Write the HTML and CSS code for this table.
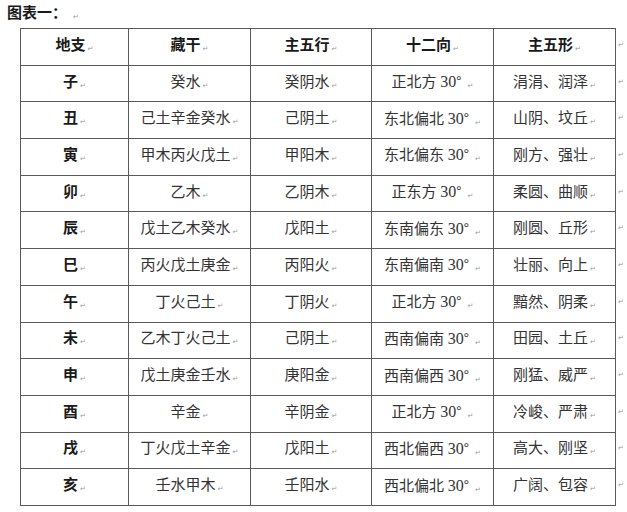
FILE: index.html
```html
<!DOCTYPE html>
<html lang="zh">
<head>
<meta charset="utf-8">
<link rel="stylesheet" href="styles.css">
</head>
<body>
<div class="title">图表一：<span class="pm">↵</span></div>
<table class="grid">
<colgroup><col class="c1"><col class="c2"><col class="c3"><col class="c4"><col class="c5"><col class="ce"></colgroup>
<thead>
<tr><th>地支<span class="pm">↵</span></th><th>藏干<span class="pm">↵</span></th><th>主五行<span class="pm">↵</span></th><th>十二向<span class="pm">↵</span></th><th>主五形<span class="pm">↵</span></th><td class="end"><span class="pm">↵</span></td></tr>
</thead>
<tbody>
<tr><td class="zhi">子<span class="pm">↵</span></td><td>癸水<span class="pm">↵</span></td><td>癸阴水<span class="pm">↵</span></td><td>正北方 <span class="num">30</span><span class="deg">°</span><span class="pm">↵</span></td><td>涓涓、润泽<span class="pm">↵</span></td><td class="end"><span class="pm">↵</span></td></tr>
<tr><td class="zhi">丑<span class="pm">↵</span></td><td>己土辛金癸水<span class="pm">↵</span></td><td>己阴土<span class="pm">↵</span></td><td>东北偏北 <span class="num">30</span><span class="deg">°</span><span class="pm">↵</span></td><td>山阴、坟丘<span class="pm">↵</span></td><td class="end"><span class="pm">↵</span></td></tr>
<tr><td class="zhi">寅<span class="pm">↵</span></td><td>甲木丙火戊土<span class="pm">↵</span></td><td>甲阳木<span class="pm">↵</span></td><td>东北偏东 <span class="num">30</span><span class="deg">°</span><span class="pm">↵</span></td><td>刚方、强壮<span class="pm">↵</span></td><td class="end"><span class="pm">↵</span></td></tr>
<tr><td class="zhi">卯<span class="pm">↵</span></td><td>乙木<span class="pm">↵</span></td><td>乙阴木<span class="pm">↵</span></td><td>正东方 <span class="num">30</span><span class="deg">°</span><span class="pm">↵</span></td><td>柔圆、曲顺<span class="pm">↵</span></td><td class="end"><span class="pm">↵</span></td></tr>
<tr><td class="zhi">辰<span class="pm">↵</span></td><td>戊土乙木癸水<span class="pm">↵</span></td><td>戊阳土<span class="pm">↵</span></td><td>东南偏东 <span class="num">30</span><span class="deg">°</span><span class="pm">↵</span></td><td>刚圆、丘形<span class="pm">↵</span></td><td class="end"><span class="pm">↵</span></td></tr>
<tr><td class="zhi">巳<span class="pm">↵</span></td><td>丙火戊土庚金<span class="pm">↵</span></td><td>丙阳火<span class="pm">↵</span></td><td>东南偏南 <span class="num">30</span><span class="deg">°</span><span class="pm">↵</span></td><td>壮丽、向上<span class="pm">↵</span></td><td class="end"><span class="pm">↵</span></td></tr>
<tr><td class="zhi">午<span class="pm">↵</span></td><td>丁火己土<span class="pm">↵</span></td><td>丁阴火<span class="pm">↵</span></td><td>正北方 <span class="num">30</span><span class="deg">°</span><span class="pm">↵</span></td><td>黯然、阴柔<span class="pm">↵</span></td><td class="end"><span class="pm">↵</span></td></tr>
<tr><td class="zhi">未<span class="pm">↵</span></td><td>乙木丁火己土<span class="pm">↵</span></td><td>己阴土<span class="pm">↵</span></td><td>西南偏南 <span class="num">30</span><span class="deg">°</span><span class="pm">↵</span></td><td>田园、土丘<span class="pm">↵</span></td><td class="end"><span class="pm">↵</span></td></tr>
<tr><td class="zhi">申<span class="pm">↵</span></td><td>戊土庚金壬水<span class="pm">↵</span></td><td>庚阳金<span class="pm">↵</span></td><td>西南偏西 <span class="num">30</span><span class="deg">°</span><span class="pm">↵</span></td><td>刚猛、威严<span class="pm">↵</span></td><td class="end"><span class="pm">↵</span></td></tr>
<tr><td class="zhi">酉<span class="pm">↵</span></td><td>辛金<span class="pm">↵</span></td><td>辛阴金<span class="pm">↵</span></td><td>正北方 <span class="num">30</span><span class="deg">°</span><span class="pm">↵</span></td><td>冷峻、严肃<span class="pm">↵</span></td><td class="end"><span class="pm">↵</span></td></tr>
<tr><td class="zhi">戌<span class="pm">↵</span></td><td>丁火戊土辛金<span class="pm">↵</span></td><td>戊阳土<span class="pm">↵</span></td><td>西北偏西 <span class="num">30</span><span class="deg">°</span><span class="pm">↵</span></td><td>高大、刚坚<span class="pm">↵</span></td><td class="end"><span class="pm">↵</span></td></tr>
<tr><td class="zhi">亥<span class="pm">↵</span></td><td>壬水甲木<span class="pm">↵</span></td><td>壬阳水<span class="pm">↵</span></td><td>西北偏北 <span class="num">30</span><span class="deg">°</span><span class="pm">↵</span></td><td>广阔、包容<span class="pm">↵</span></td><td class="end"><span class="pm">↵</span></td></tr>
</tbody>
</table>
</body>
</html>
```
FILE: styles.css
```css
html, body {
  margin: 0;
  padding: 0;
  background: #ffffff;
}
body {
  font-family: "Liberation Serif", "Noto Sans CJK SC", serif;
  color: #333333;
}
.title {
  padding: 4px 0 0 7px;
  height: 24px;
  font-size: 15px;
  font-weight: bold;
  line-height: 18px;
  color: #1a1a1a;
}
.pm {
  font-family: "DejaVu Sans", sans-serif;
  font-weight: normal;
  font-size: 7px;
  color: #9a9a9a;
  margin-left: 2px;
  vertical-align: -1px;
}
.title .pm {
  margin-left: 6px;
}
.grid {
  margin-left: 20px;
  border-collapse: collapse;
  table-layout: fixed;
  font-size: 15px;
}
.c1 { width: 108px; }
.c2 { width: 122px; }
.c3 { width: 121px; }
.c4 { width: 122px; }
.c5 { width: 122px; }
.ce { width: 10px; }
.grid th, .grid td {
  border: 1.5px solid #5a5a5a;
  height: 35.7px;
  padding: 0;
  text-align: center;
  vertical-align: middle;
  line-height: 18px;
  white-space: nowrap;
}
.grid th {
  font-weight: bold;
  color: #1a1a1a;
}
.grid td.zhi {
  font-weight: bold;
  color: #1a1a1a;
}
.num {
  font-size: 16px;
}
.deg {
  font-family: "Noto Sans CJK SC", sans-serif;
  font-size: 14px;
  margin-right: 4px;
}
.grid td.end {
  border: none;
  text-align: left;
  padding-left: 2px;
  vertical-align: middle;
  line-height: 10px;
}
.grid td.end .pm {
  margin-left: 0;
  position: relative;
  top: -4px;
}
```
